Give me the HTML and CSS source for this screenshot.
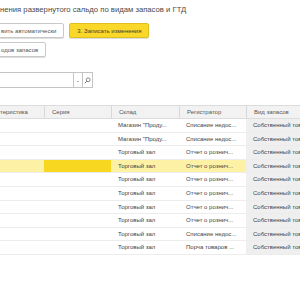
FILE: index.html
```html
<!DOCTYPE html>
<html lang="ru">
<head>
    <meta charset="UTF-8">
    <meta name="viewport" content="width=device-width, initial-scale=1.0">
    <title>Исправление развернутого сальдо</title>
    <link rel="stylesheet" href="styles.css">
</head>
<body>
    <div class="page">
        <h1 class="title">нения развернутого сальдо по видам запасов и ГТД</h1>

        <div class="toolbar">
            <button class="btn btn-first">вить автоматически</button>
            <button class="btn btn-yellow">3. Записать изменения</button>
        </div>
        <div class="toolbar">
            <button class="btn btn-first">одов запасов</button>
        </div>

        <div class="field">
            <div class="field-input"></div>
            <div class="field-btn">-</div>
            <div class="field-btn">
                <svg width="7" height="7" viewBox="0 0 7 7">
                    <circle cx="4.2" cy="2.8" r="1.9" fill="none" stroke="#777" stroke-width="0.9"/>
                    <path d="M2.8 4.2 L0.8 6.2" stroke="#777" stroke-width="1"/>
                </svg>
            </div>
        </div>

        <div class="grid">
            <div class="row head">
                <div class="cell">теристика</div>
                <div class="cell">Серия</div>
                <div class="cell">Склад</div>
                <div class="cell">Регистратор</div>
                <div class="cell">Вид запасов</div>
            </div>
            <div class="row">
                <div class="cell"></div><div class="cell"></div>
                <div class="cell">Магазин "Проду...</div>
                <div class="cell">Списание недос...</div>
                <div class="cell kind">Собственный тов</div>
            </div>
            <div class="row">
                <div class="cell"></div><div class="cell"></div>
                <div class="cell">Магазин "Проду...</div>
                <div class="cell">Списание недос...</div>
                <div class="cell kind">Собственный тов</div>
            </div>
            <div class="row">
                <div class="cell"></div><div class="cell"></div>
                <div class="cell">Торговый зал</div>
                <div class="cell">Отчет о рознич...</div>
                <div class="cell kind">Собственный тов</div>
            </div>
            <div class="row selected">
                <div class="cell"></div><div class="cell current"></div>
                <div class="cell">Торговый зал</div>
                <div class="cell">Отчет о рознич...</div>
                <div class="cell kind">Собственный тов</div>
            </div>
            <div class="row">
                <div class="cell"></div><div class="cell"></div>
                <div class="cell">Торговый зал</div>
                <div class="cell">Отчет о рознич...</div>
                <div class="cell kind">Собственный тов</div>
            </div>
            <div class="row">
                <div class="cell"></div><div class="cell"></div>
                <div class="cell">Торговый зал</div>
                <div class="cell">Отчет о рознич...</div>
                <div class="cell kind">Собственный тов</div>
            </div>
            <div class="row">
                <div class="cell"></div><div class="cell"></div>
                <div class="cell">Торговый зал</div>
                <div class="cell">Отчет о рознич...</div>
                <div class="cell kind">Собственный тов</div>
            </div>
            <div class="row">
                <div class="cell"></div><div class="cell"></div>
                <div class="cell">Торговый зал</div>
                <div class="cell">Отчет о рознич...</div>
                <div class="cell kind">Собственный тов</div>
            </div>
            <div class="row">
                <div class="cell"></div><div class="cell"></div>
                <div class="cell">Торговый зал</div>
                <div class="cell">Списание недос...</div>
                <div class="cell kind">Собственный тов</div>
            </div>
            <div class="row">
                <div class="cell"></div><div class="cell"></div>
                <div class="cell">Торговый зал</div>
                <div class="cell">Порча товаров ...</div>
                <div class="cell kind">Собственный тов</div>
            </div>
        </div>
    </div>
</body>
</html>
```

FILE: styles.css
```css
body {
    margin: 0;
    padding: 0;
    width: 300px;
    height: 300px;
    overflow: hidden;
    background: #fff;
    font-family: "Liberation Sans", Arial, sans-serif;
    color: #444;
}
.page {
    margin-left: -3px;
    width: 303px;
    overflow: hidden;
}
.title {
    margin: 0;
    padding: 3px 0 0 3px;
    height: 16px;
    font-size: 7.7px;
    line-height: 14px;
    font-weight: normal;
    color: #4a4a4a;
    white-space: nowrap;
}
.toolbar {
    display: flex;
    gap: 5px;
    margin-top: 4px;
}
.btn {
    height: 15px;
    padding: 0 7px;
    font-family: inherit;
    font-size: 6px;
    color: #555;
    background: #fff;
    border: 1px solid #c9c9c9;
    border-radius: 2px;
    box-shadow: 0 1px 0 #dedede;
}
.btn-first { padding-left: 3px; }
.btn-yellow {
    background: #f9d82a;
    border-color: #e0c020;
    color: #4a4030;
}
.field {
    display: flex;
    margin-top: 15px;
    height: 16px;
}
.field-input {
    width: 75px;
    border: 1px solid #c4c4c4;
    border-right: none;
    background: #fff;
}
.field-btn {
    width: 8px;
    border: 1px solid #c4c4c4;
    display: flex;
    align-items: center;
    justify-content: center;
    font-size: 7px;
    color: #666;
}
.field-btn + .field-btn { width: 9px; border-left: none; }
.grid {
    margin-top: 17px;
}
.row {
    display: grid;
    grid-template-columns: 47px 67px 68px 67px 54px;
    height: 13.6px;
    border-bottom: 1px solid #ececec;
    box-sizing: border-box;
}
.row.head {
    height: 14px;
    background: #f2f2f2;
    border-top: 1px solid #dcdcdc;
    border-bottom: 1px solid #dcdcdc;
    color: #555;
}
.cell {
    padding-left: 7px;
    font-size: 6px;
    line-height: 12.6px;
    white-space: nowrap;
    overflow: hidden;
    color: #444;
}
.row:not(.head) .cell:first-child { padding-left: 3px; }
.head .cell {
    line-height: 12px;
    border-left: 1px solid #d8d8d8;
    color: #555;
}
.head .cell:first-child { border-left: none; padding-left: 3px; }
.kind {
    background: #efefef;
}
.selected { background: #fdf1a6; }
.selected .current { background: #f8d721; }
```
